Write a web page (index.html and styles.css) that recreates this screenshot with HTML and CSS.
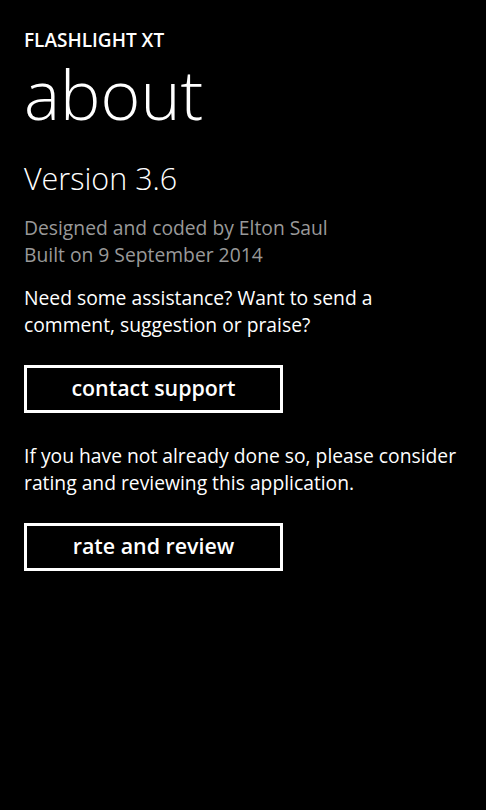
FILE: index.html
```html
<!DOCTYPE html>
<html lang="en">
<head>
  <meta charset="UTF-8" />
  <meta name="viewport" content="width=device-width, initial-scale=1.0"/>
  <title>Flashlight XT - about</title>
  <link rel="stylesheet" href="styles.css">
</head>
<body>

<header class="page-header">
  <div class="app-title">FLASHLIGHT XT</div>
  <h1 class="page-title">about</h1>
</header>

<main class="content">
  <div class="version">Version 3.6</div>

  <p class="credits">
    Designed and coded by Elton Saul<br>
    Built on 9 September 2014
  </p>

  <p class="info">Need some assistance? Want to send a comment, suggestion or praise?</p>
  <button class="wp-button">contact support</button>

  <p class="info info-rate">If you have not already done so, please consider rating and reviewing this application.</p>
  <button class="wp-button">rate and review</button>
</main>

</body>
</html>
```

FILE: styles.css
```css
* {
  box-sizing: border-box;
}

body {
  margin: 0;
  background: #000;
  color: #fff;
  font-family: 'Open Sans', 'Noto Sans', sans-serif;
}

.page-header {
  padding: 28px 24px 0;
}

.app-title {
  font-size: 19px;
  font-weight: 600;
  line-height: 24px;
}

.page-title {
  margin: 0;
  font-size: 68px;
  font-weight: 300;
  line-height: 84px;
}

.content {
  padding: 0 24px;
  display: flex;
  flex-direction: column;
  align-items: flex-start;
}

.version {
  margin-top: 24px;
  font-size: 30.5px;
  font-weight: 300;
  line-height: 36px;
}

.credits {
  margin: 18px 0 0;
  font-size: 19.3px;
  line-height: 27px;
  color: #999;
}

.info {
  margin: 16px 0 0;
  font-size: 19.3px;
  line-height: 27px;
}

.info-rate {
  margin-top: 29px;
}

.wp-button {
  margin-top: 27px;
  width: 259px;
  height: 48px;
  background: transparent;
  border: 3px solid #fff;
  color: #fff;
  font-family: inherit;
  font-size: 21.4px;
  font-weight: 600;
  padding: 0 0 3px;
  cursor: pointer;
}
```
